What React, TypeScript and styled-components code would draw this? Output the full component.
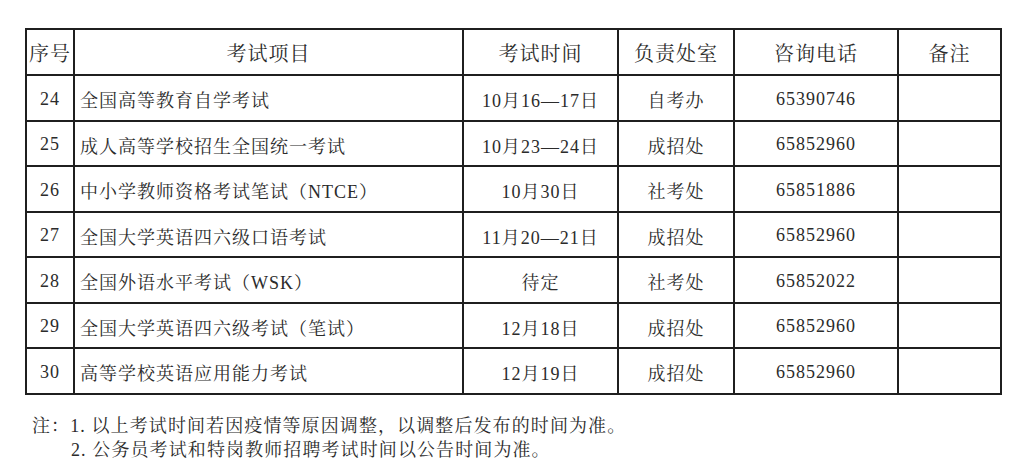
import styled, { createGlobalStyle } from 'styled-components';

const fontStack = '"Liberation Serif", "Noto Serif CJK SC", "Noto Sans CJK SC", serif';

const GlobalStyle = createGlobalStyle`
  html, body {
    margin: 0;
    padding: 0;
    background: #ffffff;
  }
  body {
    font-family: ${fontStack};
    color: #2b2b2b;
  }
`;

type Exam = {
  no: number;
  name: string;
  date: string;
  office: string;
  phone: string;
};

const exams: Exam[] = [
  { no: 24, name: '全国高等教育自学考试', date: '10月16—17日', office: '自考办', phone: '65390746' },
  { no: 25, name: '成人高等学校招生全国统一考试', date: '10月23—24日', office: '成招处', phone: '65852960' },
  { no: 26, name: '中小学教师资格考试笔试（NTCE）', date: '10月30日', office: '社考处', phone: '65851886' },
  { no: 27, name: '全国大学英语四六级口语考试', date: '11月20—21日', office: '成招处', phone: '65852960' },
  { no: 28, name: '全国外语水平考试（WSK）', date: '待定', office: '社考处', phone: '65852022' },
  { no: 29, name: '全国大学英语四六级考试（笔试）', date: '12月18日', office: '成招处', phone: '65852960' },
  { no: 30, name: '高等学校英语应用能力考试', date: '12月19日', office: '成招处', phone: '65852960' },
];

const Page = styled.div`
  padding: 28px 0 0 25px;
`;

const Table = styled.table`
  width: 975px;
  table-layout: fixed;
  border-collapse: collapse;
  border: 2px solid #1f1f1f;
  font-family: ${fontStack};
  color: #2b2b2b;
`;

const HeadRow = styled.tr`
  height: 46px;
`;

const Row = styled.tr`
  height: 45.5px;
`;

const HeadCell = styled.th`
  border: 2px solid #1f1f1f;
  padding: 0;
  font-family: ${fontStack};
  font-size: 20px;
  font-weight: 400;
  letter-spacing: 1px;
  text-align: center;
  vertical-align: middle;
`;

const Cell = styled.td<{ $align?: 'left' | 'center' }>`
  border: 2px solid #1f1f1f;
  padding: 3px 0 0 ${(p) => (p.$align === 'left' ? '5px' : '0')};
  font-family: ${fontStack};
  font-size: 18px;
  letter-spacing: 1px;
  text-align: ${(p) => p.$align ?? 'center'};
  vertical-align: middle;
  white-space: nowrap;
`;

const Notes = styled.div`
  margin-top: 19px;
  padding-left: 7px;
  font-size: 18px;
  letter-spacing: 1.1px;
  line-height: 24px;
`;

const NoteLine = styled.div<{ $indent?: boolean }>`
  padding-left: ${(p) => (p.$indent ? '39px' : '0')};
`;

export default function App() {
  return (
    <Page>
      <GlobalStyle />
      <Table>
        <colgroup>
          <col style={{ width: 48 }} />
          <col style={{ width: 389 }} />
          <col style={{ width: 155 }} />
          <col style={{ width: 116 }} />
          <col style={{ width: 164 }} />
          <col style={{ width: 103 }} />
        </colgroup>
        <thead>
          <HeadRow>
            <HeadCell>序号</HeadCell>
            <HeadCell>考试项目</HeadCell>
            <HeadCell>考试时间</HeadCell>
            <HeadCell>负责处室</HeadCell>
            <HeadCell>咨询电话</HeadCell>
            <HeadCell>备注</HeadCell>
          </HeadRow>
        </thead>
        <tbody>
          {exams.map((e) => (
            <Row key={e.no}>
              <Cell>{e.no}</Cell>
              <Cell $align="left">{e.name}</Cell>
              <Cell>{e.date}</Cell>
              <Cell>{e.office}</Cell>
              <Cell>{e.phone}</Cell>
              <Cell />
            </Row>
          ))}
        </tbody>
      </Table>
      <Notes>
        <NoteLine>注：1. 以上考试时间若因疫情等原因调整，以调整后发布的时间为准。</NoteLine>
        <NoteLine $indent>2. 公务员考试和特岗教师招聘考试时间以公告时间为准。</NoteLine>
      </Notes>
    </Page>
  );
}
